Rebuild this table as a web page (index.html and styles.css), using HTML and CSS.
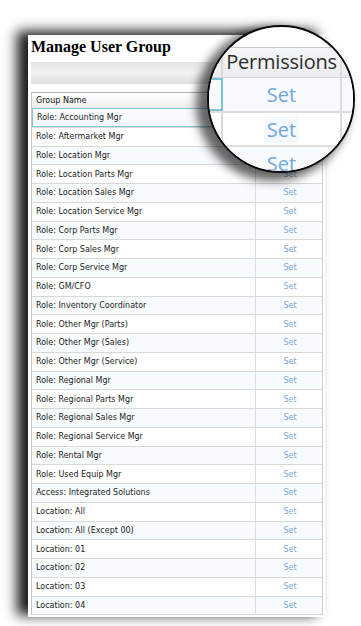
FILE: index.html
```html
<!DOCTYPE html>
<html>
<head>
<meta charset="utf-8">
<link rel="stylesheet" href="styles.css">
</head>
<body>
<div class="page">
  <h1 class="title">Manage User Group</h1>
  <div class="toolbar"></div>
  <div class="grid">
    <div class="row head"><div class="name">Group Name</div><div class="perm">Permissions</div></div>
    <div class="row odd selected"><div class="name">Role: Accounting Mgr</div><div class="perm"><a>Set</a></div></div>
    <div class="row"><div class="name">Role: Aftermarket Mgr</div><div class="perm"><a>Set</a></div></div>
    <div class="row odd"><div class="name">Role: Location Mgr</div><div class="perm"><a>Set</a></div></div>
    <div class="row"><div class="name">Role: Location Parts Mgr</div><div class="perm"><a>Set</a></div></div>
    <div class="row odd"><div class="name">Role: Location Sales Mgr</div><div class="perm"><a>Set</a></div></div>
    <div class="row"><div class="name">Role: Location Service Mgr</div><div class="perm"><a>Set</a></div></div>
    <div class="row odd"><div class="name">Role: Corp Parts Mgr</div><div class="perm"><a>Set</a></div></div>
    <div class="row"><div class="name">Role: Corp Sales Mgr</div><div class="perm"><a>Set</a></div></div>
    <div class="row odd"><div class="name">Role: Corp Service Mgr</div><div class="perm"><a>Set</a></div></div>
    <div class="row"><div class="name">Role: GM/CFO</div><div class="perm"><a>Set</a></div></div>
    <div class="row odd"><div class="name">Role: Inventory Coordinator</div><div class="perm"><a>Set</a></div></div>
    <div class="row"><div class="name">Role: Other Mgr (Parts)</div><div class="perm"><a>Set</a></div></div>
    <div class="row odd"><div class="name">Role: Other Mgr (Sales)</div><div class="perm"><a>Set</a></div></div>
    <div class="row"><div class="name">Role: Other Mgr (Service)</div><div class="perm"><a>Set</a></div></div>
    <div class="row odd"><div class="name">Role: Regional Mgr</div><div class="perm"><a>Set</a></div></div>
    <div class="row"><div class="name">Role: Regional Parts Mgr</div><div class="perm"><a>Set</a></div></div>
    <div class="row odd"><div class="name">Role: Regional Sales Mgr</div><div class="perm"><a>Set</a></div></div>
    <div class="row"><div class="name">Role: Regional Service Mgr</div><div class="perm"><a>Set</a></div></div>
    <div class="row odd"><div class="name">Role: Rental Mgr</div><div class="perm"><a>Set</a></div></div>
    <div class="row"><div class="name">Role: Used Equip Mgr</div><div class="perm"><a>Set</a></div></div>
    <div class="row odd"><div class="name">Access: Integrated Solutions</div><div class="perm"><a>Set</a></div></div>
    <div class="row"><div class="name">Location: All</div><div class="perm"><a>Set</a></div></div>
    <div class="row odd"><div class="name">Location: All (Except 00)</div><div class="perm"><a>Set</a></div></div>
    <div class="row"><div class="name">Location: 01</div><div class="perm"><a>Set</a></div></div>
    <div class="row odd"><div class="name">Location: 02</div><div class="perm"><a>Set</a></div></div>
    <div class="row"><div class="name">Location: 03</div><div class="perm"><a>Set</a></div></div>
    <div class="row odd"><div class="name">Location: 04</div><div class="perm"><a>Set</a></div></div>
  </div>
</div>

<div class="magnifier">
  <div class="mag-inner">
    <div class="mrow mhead"><div class="mname"></div><div class="mperm">Permissions</div></div>
    <div class="mrow modd"><div class="mname msel"></div><div class="mperm"><a>Set</a></div></div>
    <div class="mrow"><div class="mname"></div><div class="mperm"><a class="hover">Set</a></div></div>
    <div class="mrow modd"><div class="mname"></div><div class="mperm"><a>Set</a></div></div>
  </div>
</div>
</body>
</html>
```
FILE: styles.css
```css
html, body {
  margin: 0;
  padding: 0;
  background: #ffffff;
}

body {
  width: 361px;
  height: 626px;
  overflow: hidden;
  position: relative;
}

.page {
  margin: 35px 0 0 28px;
  width: 297px;
  height: 582px;
  background: #ffffff;
  padding: 3px 0 0 3px;
  box-sizing: border-box;
  box-shadow: -10px -3px 12px 1px rgba(0, 0, 0, 0.9);
}

.title {
  margin: 0;
  font-family: "Liberation Serif", "Times New Roman", serif;
  font-size: 16px;
  line-height: 18px;
  font-weight: bold;
  color: #000;
}

.toolbar {
  margin-top: 6px;
  width: 292px;
  height: 22px;
  background: linear-gradient(to bottom, #e4e4e4 0%, #f3f3f3 45%, #eeeeee 60%, #e0e0e0 100%);
}

.grid {
  margin-top: 8px;
  width: 292px;
  border-left: 1px solid #c4c8cc;
  border-right: 1px solid #cfcfcf;
  box-sizing: border-box;
  font-family: "DejaVu Sans", Verdana, sans-serif;
  font-size: 8px;
  color: #222;
}

.row {
  display: flex;
  height: 18.75px;
  border-bottom: 1px solid #d9d9d9;
  box-sizing: border-box;
  background: #ffffff;
}

.row.odd {
  background: #f8fbfe;
}

.row.head {
  height: 17px;
  border-top: 1px solid #a9b3bd;
  border-bottom: 1px solid #c9d0d6;
  background: linear-gradient(to bottom, #ffffff 0%, #f7f7f7 50%, #ececec 100%);
  color: #111;
}

.name {
  flex: 0 0 224px;
  box-sizing: border-box;
  padding-left: 4px;
  display: flex;
  align-items: center;
  border-right: 1px solid #dddddd;
  white-space: nowrap;
}

.perm {
  flex: 1 1 auto;
  display: flex;
  align-items: center;
  justify-content: center;
}

.perm a {
  color: #78a8dc;
  padding-left: 2px;
}

.selected .name {
  border: 1px solid #85c7d6;
  margin-top: -1px;
}

/* magnifier overlay */
.magnifier {
  position: absolute;
  left: 207px;
  top: 25px;
  width: 144px;
  height: 144px;
  border: 2px solid #0a0a0a;
  border-radius: 50%;
  overflow: hidden;
  background: #ffffff;
  box-shadow: -8px 5px 10px 3px rgba(0, 0, 0, 0.6);
}

.mag-inner {
  padding-top: 20px;
  font-family: "Open Sans", "Segoe UI", sans-serif;
  font-size: 20px;
}

.mrow {
  display: flex;
  height: 34.5px;
  border-bottom: 2px solid #dcdcdc;
  box-sizing: border-box;
  background: #ffffff;
}

.mrow.modd {
  background: #f8fbfe;
}

.mrow.mhead {
  height: 31px;
  border-top: 1px solid #c4c9ce;
  border-bottom: 1px solid #d4d8dc;
  background: linear-gradient(to bottom, #f4f5f6 0%, #eceeef 100%);
}

.mname {
  flex: 0 0 14px;
  box-sizing: border-box;
  border-right: 2px solid #d8d8d8;
}

.mname.msel {
  border-right: 2px solid #7fc4d4;
  border-top: 2px solid #7fc4d4;
  border-bottom: 2px solid #7fc4d4;
}

.mperm {
  flex: 0 0 119px;
  box-sizing: border-box;
  border-right: 2px solid #dddddd;
  text-align: center;
  line-height: 33px;
}

.mhead .mperm {
  line-height: 28px;
  color: #2e2e2e;
  letter-spacing: -0.2px;
}

.mperm a {
  color: #72a7de;
}

.mperm a.hover {
  background: #f5f8fc;
  padding: 0 3px;
}
```
